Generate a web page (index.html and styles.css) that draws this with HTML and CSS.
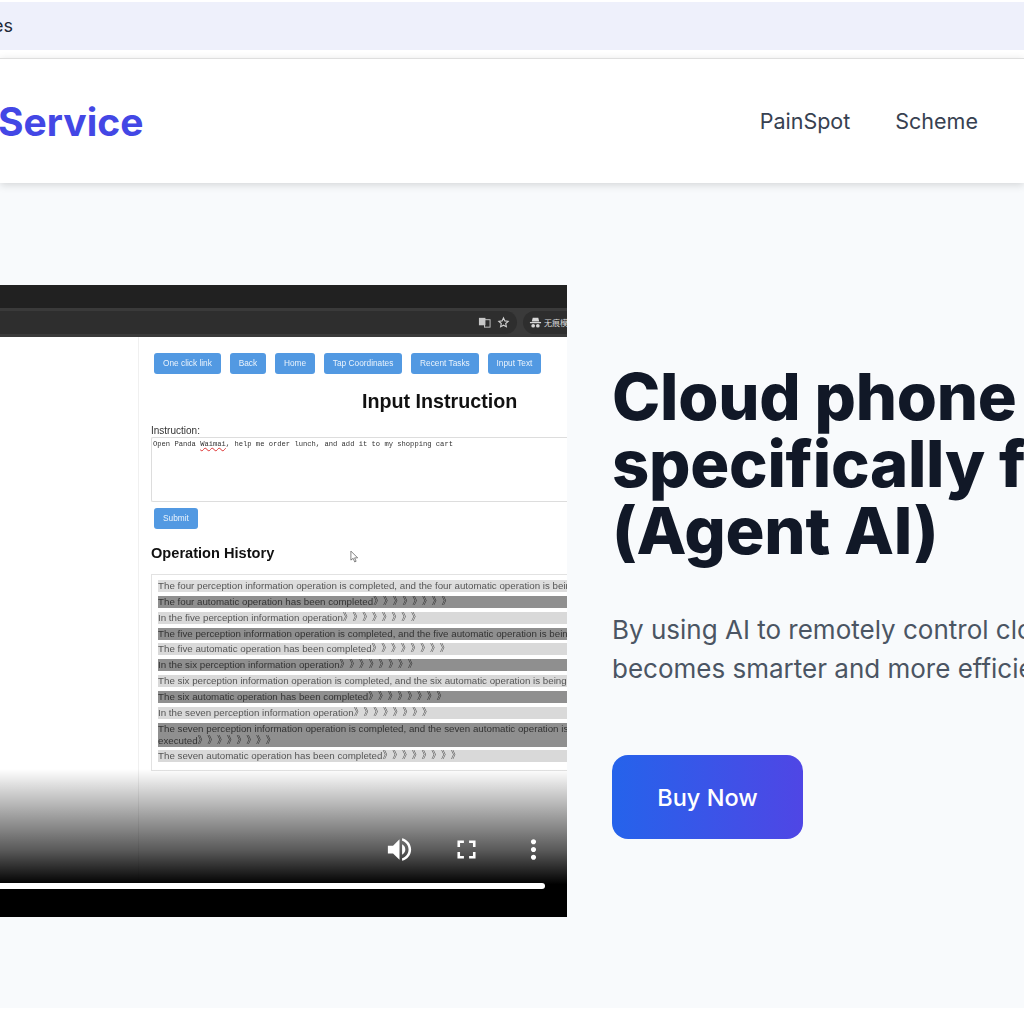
FILE: index.html
```html
<!DOCTYPE html>
<html lang="en">
<head>
  <meta charset="UTF-8">
  <title>Cloud Phone Service</title>
  <link rel="stylesheet" href="styles.css">
</head>
<body>

<div class="notice">es</div>

<header class="site-header">
  <div class="brand">Service</div>
  <nav class="site-nav">
    <a>PainSpot</a>
    <a>Scheme</a>
  </nav>
</header>

<main class="hero">
  <div class="hero-inner">
    <!-- demo video frame -->
    <div class="video">
      <div class="tab-strip"></div>
      <div class="toolbar">
        <div class="address">
          <svg class="tool-icon" viewBox="0 0 14 14"><rect x="1" y="2" width="7" height="8" fill="#c8c8c8"/><rect x="7" y="4" width="6" height="8" fill="none" stroke="#c8c8c8"/></svg>
          <svg class="tool-icon" viewBox="0 0 14 14"><path d="M7 2l1.500 3.300 3.500.4-2.600 2.400.7 3.500L7 9.900l-3.100 1.700.7-3.500L2 5.700l3.500-.4z" fill="none" stroke="#d0d0d0" stroke-width="1.200"/></svg>
        </div>
        <div class="profile">
          <svg class="tool-icon" viewBox="0 0 14 14"><path d="M4 2h6l1 4H3zM1 6.500h12v1.200H1z" fill="#d8d8d8"/><circle cx="4.500" cy="10.500" r="2" fill="#d8d8d8"/><circle cx="9.500" cy="10.500" r="2" fill="#d8d8d8"/></svg>
          <span>无痕模式</span>
        </div>
      </div>

      <div class="screen">
        <div class="phone-pane"></div>
        <div class="console">
          <div class="console-actions">
            <span class="console-btn">One click link</span>
            <span class="console-btn">Back</span>
            <span class="console-btn">Home</span>
            <span class="console-btn">Tap Coordinates</span>
            <span class="console-btn">Recent Tasks</span>
            <span class="console-btn">Input Text</span>
          </div>
          <h3 class="console-title">Input Instruction</h3>
          <div class="console-label">Instruction:</div>
          <div class="console-input">Open Panda <span class="typo">Waimai</span>, help me order lunch, and add it to my shopping cart</div>
          <span class="console-btn console-submit">Submit</span>
          <h4 class="history-title">Operation History</h4>
          <div class="history">
            <div class="row first">The four perception information operation is completed, and the four automatic operation is being executed</div>
            <div class="row dark">The four automatic operation has been completed》》》》》》》》</div>
            <div class="row">In the five perception information operation》》》》》》》》</div>
            <div class="row dark">The five perception information operation is completed, and the five automatic operation is being executed</div>
            <div class="row">The five automatic operation has been completed》》》》》》》》</div>
            <div class="row dark">In the six perception information operation》》》》》》》》</div>
            <div class="row">The six perception information operation is completed, and the six automatic operation is being executed</div>
            <div class="row dark">The six automatic operation has been completed》》》》》》》》</div>
            <div class="row">In the seven perception information operation》》》》》》》》</div>
            <div class="row dark wrap">The seven perception information operation is completed, and the seven automatic operation is<br>executed》》》》》》》》</div>
            <div class="row">The seven automatic operation has been completed》》》》》》》》</div>
          </div>
        </div>
        <svg class="cursor" viewBox="0 0 10 14"><path d="M1 1v10l2.500-2 1.700 4 1.600-.7-1.700-3.800H8.500z" fill="#fff" stroke="#555" stroke-width=".8"/></svg>
      </div>

      <!-- player controls over the frame -->
      <div class="player">
        <div class="player-icons">
          <svg class="player-icon" viewBox="0 0 24 24"><path d="M3 9v6h4l5 5V4L7 9H3zm13.500 3c0-1.770-1.020-3.290-2.500-4.030v8.050c1.480-.73 2.500-2.250 2.500-4.020zM14 3.230v2.060c2.890.86 5 3.540 5 6.710s-2.110 5.850-5 6.710v2.060c4.010-.91 7-4.490 7-8.770s-2.990-7.860-7-8.770z"/></svg>
          <svg class="player-icon" viewBox="0 0 24 24"><path d="M7 14H5v5h5v-2H7v-3zm-2-4h2V7h3V5H5v5zm12 7h-3v2h5v-5h-2v3zM14 5v2h3v3h2V5h-5z"/></svg>
          <svg class="player-icon" viewBox="0 0 24 24"><path d="M12 8c1.100 0 2-.9 2-2s-.9-2-2-2-2 .9-2 2 .9 2 2 2zm0 2c-1.100 0-2 .9-2 2s.9 2 2 2 2-.9 2-2-.9-2-2-2zm0 6c-1.100 0-2 .9-2 2s.9 2 2 2 2-.9 2-2-.9-2-2-2z"/></svg>
        </div>
        <div class="progress"></div>
      </div>
    </div>

    <div class="hero-copy">
      <h1>Cloud phone<br>specifically for<br>(Agent AI)</h1>
      <p>By using AI to remotely control cloud phones, it<br>becomes smarter and more efficient</p>
      <a class="buy-btn">Buy Now</a>
    </div>
  </div>
</main>

</body>
</html>
```

FILE: styles.css
```css
html, body { height: 100%; }
body { margin: 0; width: 1024px; height: 1024px; overflow: hidden; background: #fff; font-family: Inter, "Liberation Sans", sans-serif; color: #111827; }

.notice { height: 48px; margin-top: 2px; background: #eef0fb; line-height: 48px; font-size: 18px; color: #1f2937; text-indent: -7px; }

.site-header { position: relative; display: flex; justify-content: space-between; align-items: center; height: 124px; margin-top: 8px; padding-right: 46px; background: #fff; border-top: 1px solid #dedede; box-shadow: 0 2px 8px rgba(0, 0, 0, .15); white-space: nowrap; }
.brand { margin-left: -2px; font-size: 39px; font-weight: 700; color: #4347e5; }
.site-nav { display: flex; gap: 45px; font-size: 21.500px; color: #374151; }

.hero { height: 825px; background: #f8fafc; }
.hero-inner { display: flex; align-items: center; gap: 45px; padding-top: 102px; white-space: nowrap; }

.video { position: relative; flex: none; width: 567px; height: 632px; overflow: hidden; display: flex; flex-direction: column; background: #fff; font-family: "Liberation Sans", sans-serif; }
.tab-strip { height: 23px; background: #212121; }
.toolbar { display: flex; align-items: center; height: 29px; background: #3a3a3a; padding: 3px 0; box-sizing: border-box; }
.address { display: flex; align-items: center; justify-content: flex-end; gap: 6px; width: 517px; height: 100%; padding-right: 7px; box-sizing: border-box; background: #2e2e2e; border-radius: 0 12px 12px 0; }
.profile { display: flex; align-items: center; gap: 2px; height: 100%; margin-left: 6px; padding-left: 6px; flex: 1; background: #2e2e2e; border-radius: 12px 0 0 12px; font-family: "Noto Sans CJK SC", sans-serif; font-size: 8px; color: #d8d8d8; overflow: hidden; }
.tool-icon { width: 13px; height: 13px; flex: none; }

.screen { position: relative; flex: 1; display: flex; filter: blur(.35px); }
.phone-pane { width: 138px; flex: none; border-right: 1px solid #f0f0f0; }
.console { flex: 1; padding: 16px 0 0 12px; color: #222; min-width: 0; }
.console-actions { display: flex; gap: 8.800px; padding-left: 3px; }
.console-btn { display: block; padding: 0 9px; height: 21px; line-height: 21px; background: #5299e2; border-radius: 3px; color: #eaf3fc; font-size: 8.300px; }
.console-title { margin: 15px 0 0 0; padding-left: 211px; font-size: 19.700px; line-height: 24px; color: #111; }
.console-label { margin-top: 12px; font-size: 10px; line-height: 12px; color: #333; }
.console-input { height: 65px; border: 1px solid #ddd; border-right: 0; border-radius: 2px 0 0 2px; padding: 2px 1px; box-sizing: border-box; font-family: "Liberation Mono", monospace; font-size: 7.150px; line-height: 9px; color: #333; }
.typo { text-decoration: underline wavy #d33 .5px; }
.console-submit { width: fit-content; margin: 6px 0 0 3px; }
.history-title { margin: 15px 0 0; font-size: 14.600px; line-height: 18px; color: #111; }
.history { margin-top: 12px; padding: 5px 0 8px 6px; border: 1px solid #e2e2e2; border-right: 0; display: flex; flex-direction: column; gap: 3.850px; font-size: 9.750px; color: #555; overflow: hidden; }
.row { height: 12px; line-height: 12px; background: #d9d9d9; font-family: "Liberation Sans", "Noto Sans CJK SC", sans-serif; white-space: nowrap; text-spacing-trim: space-all; }
.row.first { background: #dddddd; }
.row.dark { background: #8f8f8f; color: #333; }
.row.wrap { height: 24px; }
.cursor { position: absolute; left: 350px; top: 213px; width: 9px; height: 13px; }

.player { position: absolute; left: 0; right: 0; bottom: 0; height: 148px; display: flex; flex-direction: column; justify-content: flex-end; background: linear-gradient(to bottom, rgba(0, 0, 0, 0), rgba(0, 0, 0, .65) 55%, #000 78%); }
.player-icons { display: flex; justify-content: flex-end; gap: 36px; padding-right: 18px; }
.player-icon { width: 31px; height: 31px; fill: #fff; flex: none; }
.progress { width: 545px; height: 6px; margin: 18px 0 28px; background: #fff; border-radius: 0 3px 3px 0; }

.hero-copy { flex: none; }
.hero-copy h1 { margin: 0; font-size: 65px; line-height: 67px; font-weight: 800; letter-spacing: -.25px; color: #111827; }
.hero-copy p { margin: 46px 0 0; font-size: 26px; line-height: 39px; color: #4b5563; }
.buy-btn { display: flex; align-items: center; justify-content: center; width: 191px; height: 84px; margin-top: 67px; border-radius: 16px; background: linear-gradient(to right, #2563eb, #4f46e5); color: #fff; font-size: 23.500px; font-weight: 500; }
```
